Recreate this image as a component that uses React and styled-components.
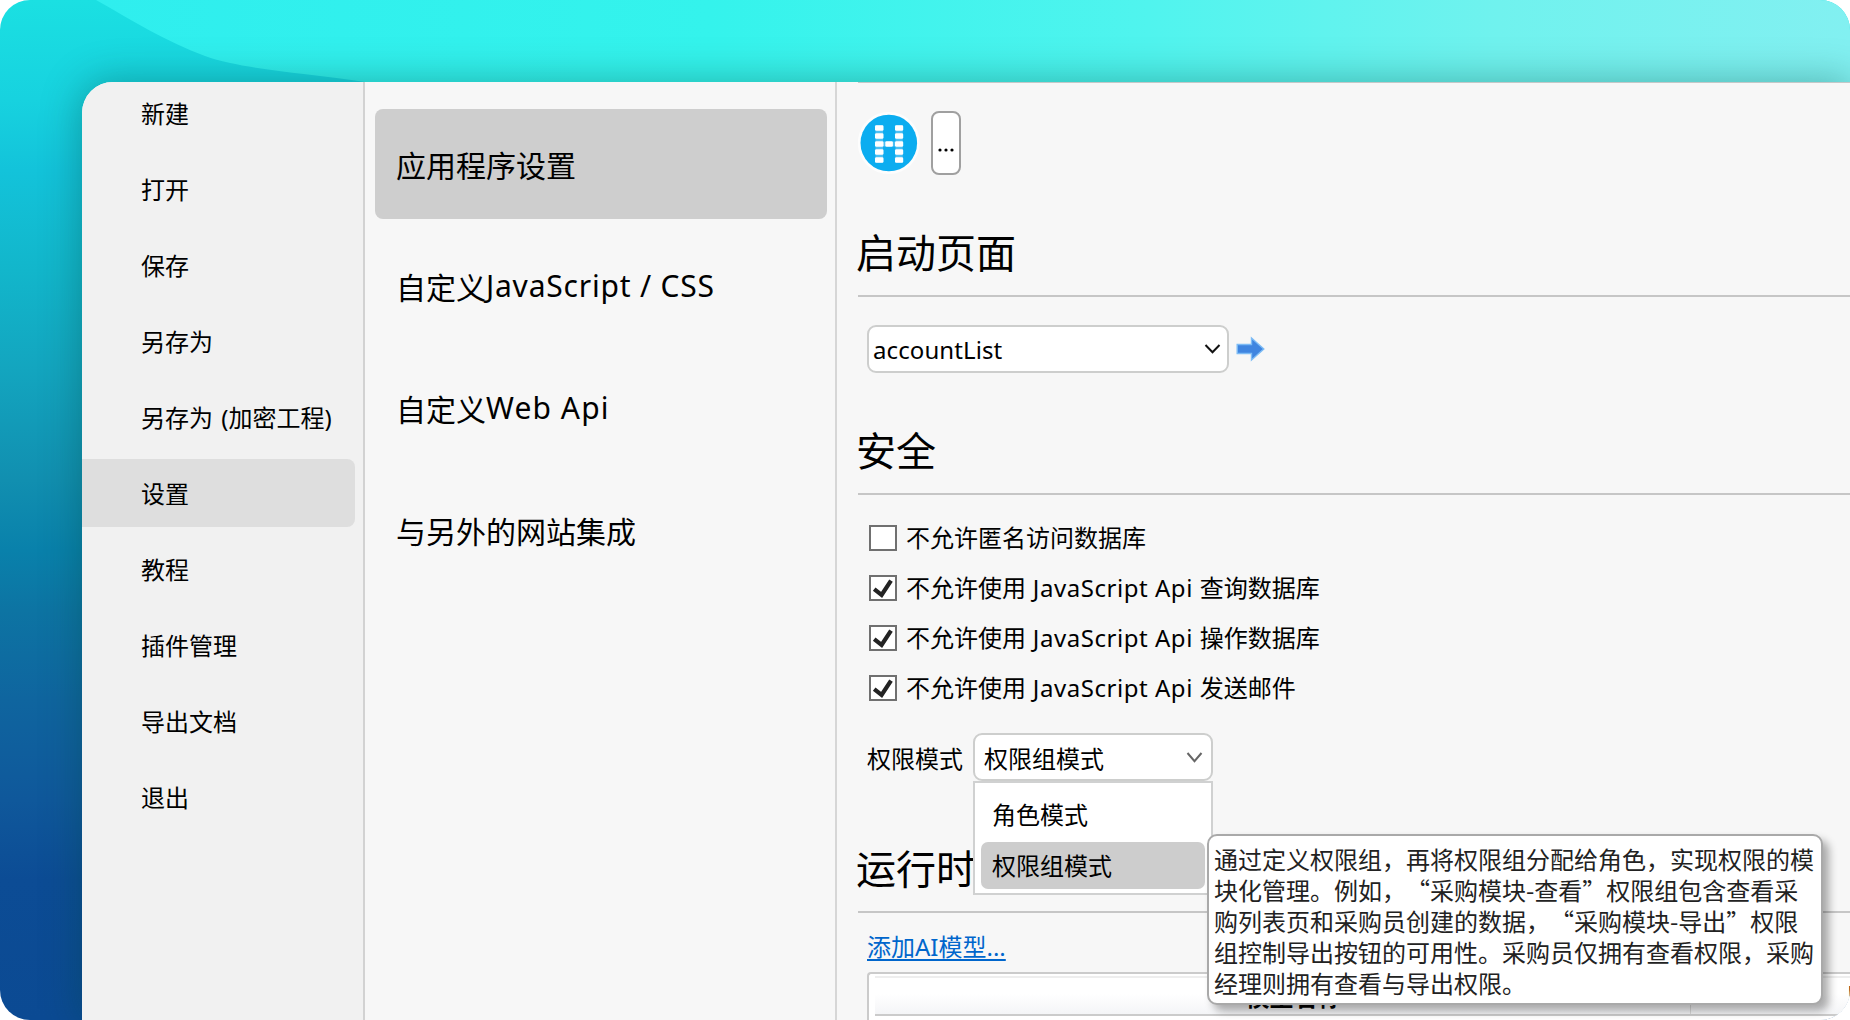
import React from "react";
import styled, { createGlobalStyle } from "styled-components";

const Global = createGlobalStyle`
  * { box-sizing: border-box; }
  html, body { margin: 0; background: #fff; }
  body {
    width: 1850px; height: 1020px; overflow: hidden;
    font-family: "Noto Sans", "Noto Sans CJK SC", sans-serif;
    font-size: 24px; color: #000;
  }
`;

const Desktop = styled.div`
  position: relative;
  width: 1850px; height: 1020px;
  padding: 82px 0 0 82px;
  border-radius: 30px;
  overflow: hidden;
  background: linear-gradient(180deg, #1be0e2 0, #17d2df 100px, #13c3da 170px, #12b6cb 270px, #13a5bf 370px,
    #118fb0 480px, #0981ab 550px, #0d74a3 610px, #0f659f 700px, #0f589b 800px, #0c4c95 880px, #0b4a93 1020px);
`;

const Wave = styled.svg`
  position: absolute; left: 0; top: 0; width: 1850px; height: 130px;
`;

const Window = styled.div`
  position: relative;
  display: flex;
  width: 1768px; height: 938px;
  border-radius: 31px 0 0 0;
  background: #f7f7f7;
  box-shadow: 0 0 38px 2px rgba(0, 70, 60, 0.36);
`;

const Clip = styled.div`
  display: flex; flex: 1; min-width: 0;
  border-radius: inherit;
  overflow: hidden;
`;

const Sidebar = styled.nav`
  flex: 0 0 283px;
  display: flex; flex-direction: column; gap: 8px;
  border-right: 2px solid #d2d2d2;
  background: #f1f1f1;
`;

const NavItem = styled.div`
  flex: 0 0 68px;
  display: flex; align-items: center;
  width: 273px;
  padding: 0 0 2px 59px;
  border-radius: 0 8px 8px 0;
  background: ${(p) => (p.$active ? "#dedede" : "transparent")};
  white-space: pre;
  word-spacing: 2px;
  &:first-child { margin-top: -3px; }
`;

const Categories = styled.div`
  flex: 0 0 472px;
  display: flex; flex-direction: column; gap: 12px;
  padding: 27px 8px 0 10px;
  border-right: 2px solid #d6d6d6;
`;

const Category = styled.div`
  flex: 0 0 110px;
  display: flex; align-items: center;
  padding: 0 0 1px 21px;
  border-radius: 8px;
  background: ${(p) => (p.$active ? "#cecece" : "transparent")};
  font-size: 30px;
  white-space: pre;
`;

const Latin = styled.span`
  letter-spacing: ${(p) => p.$ls || 0}px;
`;

const Content = styled.main`
  flex: 1; min-width: 0;
  display: flex; flex-direction: column;
  margin-left: 21px;
  border-top: 1px solid #c4c8c8;
`;

const IconRow = styled.div`
  display: flex; gap: 11px;
  height: 92px; padding-top: 28px;
`;

const MoreButton = styled.button`
  width: 30px; height: 64px;
  padding: 0 0 3px 0;
  border: 2px solid #a0a0a0; border-radius: 8px;
  background: #fff;
  display: flex; align-items: center; justify-content: center;
`;

const Heading = styled.h2`
  height: ${(p) => p.$h}px;
  margin: 0;
  padding-bottom: 12px;
  display: flex; align-items: flex-end;
  border-bottom: 2px solid #c6c6c6;
  font-size: 40px; font-weight: 400; line-height: 60px;
  text-indent: -2px;
`;

const StartRow = styled.div`
  display: flex; align-items: center; gap: 7px;
  padding: 28px 0 0 9px;
`;

const Select = styled.div`
  position: relative;
  display: flex; align-items: center; justify-content: space-between;
  width: ${(p) => p.$w}px; height: 48px;
  padding: 0 ${(p) => p.$pr}px 0 ${(p) => p.$pl}px;
  border: 2px solid #cdcecd; border-radius: 9px;
  background: #fff;
`;

const Checks = styled.div`
  display: flex; flex-direction: column; gap: 24px;
  padding: 30px 0 0 11px;
`;

const CheckRow = styled.label`
  display: flex; align-items: center; gap: 9px;
  height: 26px; line-height: 26px;
  white-space: pre;
`;

const Box = styled.span`
  width: 28px; height: 26px;
  border: 2px solid #707070;
  background: #fff;
  display: flex;
`;

const ModeRow = styled.div`
  display: flex; align-items: center; gap: 10px;
  padding: 32px 0 0 9px;
`;

const Popup = styled.div`
  position: absolute; z-index: 2; left: -2px; top: 46px;
  width: 240px; height: 114px;
  display: flex; flex-direction: column; gap: 4px;
  padding: 8px 6px;
  border: 2px solid #d0d1d1;
  background: #fff;
`;

const Option = styled.div`
  flex: 0 0 47px;
  display: flex; align-items: center;
  padding: 0 0 2px 11px;
  border-radius: 7px;
  background: ${(p) => (p.$active ? "#cdcdcd" : "transparent")};
`;

const Tooltip = styled.div`
  position: absolute; z-index: 3; left: 232px; top: 99px;
  width: 616px; height: 171px;
  padding: 7px 0 0 5px;
  border: 2px solid #a9a9a9; border-radius: 10px;
  background: #fff;
  box-shadow: 6px 6px 9px rgba(0, 0, 0, 0.32);
  font-family: "Noto Sans CJK SC", sans-serif;
  line-height: 31px;
  color: #222;
`;

const Line = styled.div`
  white-space: pre;
  text-spacing-trim: space-all;
`;

const Link = styled.a`
  align-self: flex-start;
  margin: 15px 0 0 9px;
  height: 44px; line-height: 38px;
  color: #0066cc;
  text-decoration: underline;
  text-decoration-thickness: 2px;
  text-underline-offset: 3px;
  text-decoration-skip-ink: none;
  white-space: pre;
`;

const Table = styled.div`
  flex: 1;
  margin-left: 9px; padding: 2px 0 0 6px;
  border: 2px solid #cbcbcb; border-right: 0; border-bottom: 0;
  border-radius: 4px 0 0 0;
  background: #fff;
`;

const HeadRow = styled.div`
  display: flex;
  height: 40px;
  border-top: 2px solid #eeeeee;
  border-bottom: 2px solid #cbcbcb;
  background: linear-gradient(#fff 45%, #f4f5f7);
  font-weight: 700;
`;

const HeadCell = styled.div`
  flex: 0 0 ${(p) => p.$w}px;
  display: flex; align-items: center; justify-content: center;
  padding: 0 0 2px ${(p) => p.$pl || 0}px;
  border-right: 1px solid #dadada;
  white-space: nowrap;
  overflow: hidden;
`;

const nav = ["新建", "打开", "保存", "另存为", "另存为 (加密工程)", "设置", "教程", "插件管理", "导出文档", "退出"];

const checks = [
  ["不允许匿名访问数据库", "", "", false],
  ["不允许使用", " JavaScript Api ", "查询数据库", true],
  ["不允许使用", " JavaScript Api ", "操作数据库", true],
  ["不允许使用", " JavaScript Api ", "发送邮件", true],
];

const tip = [
  "通过定义权限组，再将权限组分配给角色，实现权限的模",
  "块化管理。例如，“采购模块-查看”权限组包含查看采",
  "购列表页和采购员创建的数据，“采购模块-导出”权限",
  "组控制导出按钮的可用性。采购员仅拥有查看权限，采购",
  "经理则拥有查看与导出权限。",
];

function AppLogo() {
  const dots = [];
  for (let r = 0; r < 5; r++) {
    dots.push([17, 17 + r * 8, 8.5], [37, 17 + r * 8, 8.2]);
  }
  dots.push([27.3, 33, 7.6]);
  return (
    <svg width="62" height="64" viewBox="0 0 62 64">
      <circle cx="30.8" cy="32" r="31" fill="#fdfdfd" />
      <circle cx="30.8" cy="32" r="28.3" fill="#0cadf0" />
      <g fill="#4cbff4">
        <rect x="17.5" y="14" width="7.5" height="38" />
        <rect x="37.5" y="14" width="7.2" height="38" />
        <rect x="25" y="30.5" width="12.5" height="5" />
      </g>
      {dots.map(([x, y, w], i) => (
        <rect key={i} x={x} y={y - 2.8} width={w} height="5.6" rx="1.3" fill="#fff" />
      ))}
    </svg>
  );
}

function Chevron({ w, h, color }) {
  return (
    <svg width={w} height={h} viewBox={`0 0 ${w} ${h}`} fill="none" stroke={color} strokeWidth="2">
      <path d={`M1.5 1L${w / 2} ${h - 1.8}L${w - 1.5} 1`} />
    </svg>
  );
}

export default function App() {
  return (
    <>
      <Global />
      <Desktop lang="zh-CN">
        <Wave viewBox="0 0 1850 130">
          <defs>
            <linearGradient id="sky" x1="0" x2="1" y1="0" y2="0">
              <stop offset="0" stopColor="#2feeee" />
              <stop offset="0.35" stopColor="#34f3ec" />
              <stop offset="0.6" stopColor="#50f4ee" />
              <stop offset="0.8" stopColor="#70f2ee" />
              <stop offset="1" stopColor="#82f0f1" />
            </linearGradient>
          </defs>
          <path d="M96 0C135 22 165 41 205 56C245 70 300 72 365 82L420 130H1850V0Z" fill="url(#sky)" />
        </Wave>
        <Window>
          <Clip>
            <Sidebar>
              {nav.map((n) => (
                <NavItem key={n} $active={n === "设置"}>{n}</NavItem>
              ))}
            </Sidebar>
            <Categories>
              <Category $active>应用程序设置</Category>
              <Category>自定义<Latin $ls={0.8}>JavaScript / CSS</Latin></Category>
              <Category>自定义<Latin $ls={1.1}>Web Api</Latin></Category>
              <Category>与另外的网站集成</Category>
            </Categories>
            <Content>
              <IconRow>
                <AppLogo />
                <MoreButton aria-label="更多">
                  <svg width="18" height="24" viewBox="0 0 18 24" fill="#000">
                    <circle cx="3" cy="20" r="1.6" />
                    <circle cx="9" cy="20" r="1.6" />
                    <circle cx="15" cy="20" r="1.6" />
                  </svg>
                </MoreButton>
              </IconRow>
              <Heading $h={122}>启动页面</Heading>
              <StartRow>
                <Select $w={362} $pl={4} $pr={6}>
                  <Latin $ls={0.1}>accountList</Latin>
                  <Chevron w={17} h={10} color="#111" />
                </Select>
                <svg width="29" height="26" viewBox="0 0 29 26">
                  <path d="M1.2 8.5H15.5V2L27.8 13L15.5 24V17.5H1.2Z" fill="#3f85e0" stroke="#7dbcf5" strokeWidth="1.4" />
                </svg>
              </StartRow>
              <Heading $h={122}>安全</Heading>
              <Checks>
                {checks.map(([a, b, c, on]) => (
                  <CheckRow key={a + c}>
                    <Box>
                      {on && (
                        <svg width="24" height="22" viewBox="0 0 24 22" fill="none" stroke="#222" strokeWidth="4.2">
                          <path d="M3.2 12.2L10.6 18L20 3.6" />
                        </svg>
                      )}
                    </Box>
                    <span>{a}<Latin $ls={0.55}>{b}</Latin>{c}</span>
                  </CheckRow>
                ))}
              </Checks>
              <ModeRow>
                <span>权限模式</span>
                <Select $w={240} $pl={9} $pr={8}>
                  <span>权限组模式</span>
                  <Chevron w={17} h={11} color="#666" />
                  <Popup>
                    <Option>角色模式</Option>
                    <Option $active>权限组模式</Option>
                  </Popup>
                  <Tooltip>
                    {tip.map((t) => <Line key={t}>{t}</Line>)}
                  </Tooltip>
                </Select>
              </ModeRow>
              <Heading $h={132}>运行时</Heading>
              <Link>添加AI模型...</Link>
              <Table>
                <HeadRow>
                  <HeadCell $w={816} $pl={22}>模型名称</HeadCell>
                  <HeadCell $w={410} $pl={0}>默认模型</HeadCell>
                </HeadRow>
              </Table>
            </Content>
          </Clip>
        </Window>
      </Desktop>
    </>
  );
}
